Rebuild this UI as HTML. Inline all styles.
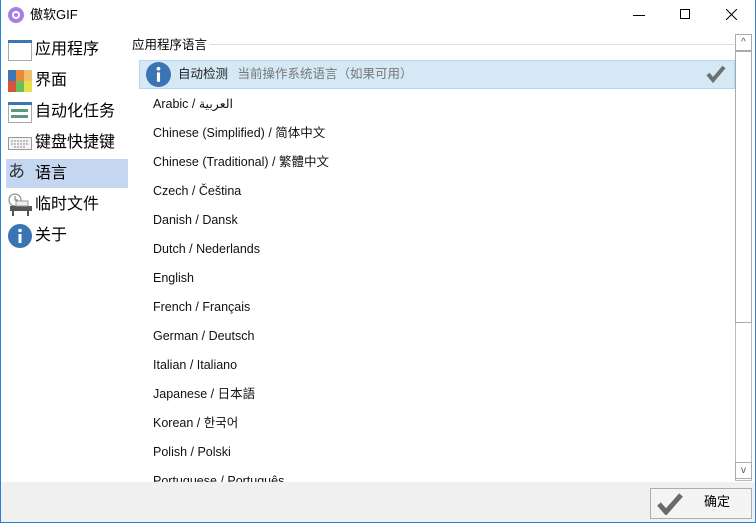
<!DOCTYPE html>
<html><head><meta charset="utf-8"><style>
*{margin:0;padding:0;box-sizing:border-box}
body{width:756px;height:523px;overflow:hidden;background:#fff;font-family:"Liberation Sans","Noto Sans CJK SC",sans-serif;position:relative;color:#000}
.win{position:absolute;left:0;top:0;width:756px;height:523px;border:1px solid #2b7fd6;border-top:none}
.title{position:absolute;left:30px;top:7px;font-size:13px;line-height:16px}
.nav{position:absolute;left:6px;font-size:16px;height:29px;width:122px;line-height:29px;padding-left:29px}
.ic{position:absolute;left:2px;top:3px;width:24px;height:24px}
.item{position:absolute;left:153px;font-size:12.5px;color:#111;line-height:16px;height:16px;white-space:nowrap}
.foot{position:absolute;left:1px;top:482px;width:754px;height:40px;background:#f0f0f0}
</style></head><body>
<div class="win"></div>
<svg style="position:absolute;left:8px;top:7px" width="16" height="16"><circle cx="8" cy="8" r="8" fill="#a57ee6"/><circle cx="8" cy="8" r="4" fill="#fff"/><circle cx="8" cy="8" r="2" fill="#a57ee6"/></svg>
<div class="title">傲软GIF</div>
<div style="position:absolute;left:633px;top:15px;width:12px;height:1px;background:#000"></div>
<div style="position:absolute;left:680px;top:9px;width:10px;height:10px;border:1px solid #000"></div>
<svg style="position:absolute;left:726px;top:9px" width="11" height="11"><path d="M0 0L11 11M11 0L0 11" stroke="#000"/></svg>

<div class="nav" style="top:35px"><svg class="ic" viewBox="0 0 24 24"><rect x="0.5" y="2.5" width="23" height="20" fill="#fff" stroke="#aaa"/><rect x="0" y="2" width="24" height="3" fill="#3d75b5"/></svg>应用程序</div>
<div class="nav" style="top:66px"><svg class="ic" viewBox="0 0 24 24"><rect x="0" y="1" width="8" height="11" fill="#3d75b5"/><rect x="8" y="1" width="8" height="11" fill="#ea8a3a"/><rect x="16" y="1" width="8" height="11" fill="#f0c070"/><rect x="0" y="12" width="8" height="11" fill="#d9533a"/><rect x="8" y="12" width="8" height="11" fill="#6bbf5a"/><rect x="16" y="12" width="8" height="11" fill="#e6e04a"/></svg>界面</div>
<div class="nav" style="top:97px"><svg class="ic" viewBox="0 0 24 24"><rect x="0.5" y="2.5" width="23" height="20" fill="#fff" stroke="#aaa"/><rect x="0" y="2" width="24" height="3" fill="#3d75b5"/><rect x="3" y="9" width="17" height="3" fill="#5a9a7a"/><rect x="3" y="15" width="17" height="3" fill="#5a9a7a"/></svg>自动化任务</div>
<div class="nav" style="top:128px"><svg class="ic" viewBox="0 0 24 24"><rect x="0.5" y="6.5" width="23" height="12" fill="#f4f4f4" stroke="#999"/><path d="M3 10h18M3 13h18M6 16h12" stroke="#888" stroke-dasharray="2 1"/></svg>键盘快捷键</div>
<div class="nav" style="top:159px;background:#c4d6f0"><span class="ic" style="font-size:17px;line-height:20px;color:#333">あ</span>语言</div>
<div class="nav" style="top:190px"><svg class="ic" viewBox="0 0 24 24"><circle cx="7" cy="7" r="6" fill="#fff" stroke="#777"/><path d="M7 3v4h3" stroke="#777" fill="none"/><rect x="2" y="13" width="22" height="5" fill="#555"/><rect x="8" y="8" width="12" height="5" fill="#eee" stroke="#999"/><path d="M5 18v5M20 18v5" stroke="#555" stroke-width="2"/></svg>临时文件</div>
<div class="nav" style="top:221px"><svg class="ic" viewBox="0 0 24 24"><circle cx="12" cy="12" r="12" fill="#3a74b3"/><rect x="10.5" y="10" width="3" height="9" fill="#fff"/><circle cx="12" cy="6.5" r="1.8" fill="#fff"/></svg>关于</div>

<div style="position:absolute;left:132px;top:37px;font-size:12.5px;line-height:16px">应用程序语言</div>
<div style="position:absolute;left:210px;top:44px;width:524px;height:1px;background:#ddd"></div>

<div style="position:absolute;left:139px;top:60px;width:596px;height:29px;background:#d4e8f6;border:1px solid #b6d7ef"></div>
<svg style="position:absolute;left:146px;top:62px" width="25" height="25" viewBox="0 0 24 24"><circle cx="12" cy="12" r="12" fill="#3a74b3"/><rect x="10.5" y="10" width="3" height="9" fill="#fff"/><circle cx="12" cy="6.5" r="1.8" fill="#fff"/></svg>
<div style="position:absolute;left:178px;top:66px;font-size:12.5px;line-height:16px;color:#222">自动检测 <span style="color:#777;margin-left:6px">当前操作系统语言（如果可用）</span></div>
<svg style="position:absolute;left:706px;top:65px" width="20" height="18"><path d="M2 9l5 6L18 2" stroke="#6f6f6f" stroke-width="4" fill="none"/></svg>

<div class="item" style="top:96px">Arabic / العربية</div>
<div class="item" style="top:125px">Chinese (Simplified) / 简体中文</div>
<div class="item" style="top:154px">Chinese (Traditional) / 繁體中文</div>
<div class="item" style="top:183px">Czech / Čeština</div>
<div class="item" style="top:212px">Danish / Dansk</div>
<div class="item" style="top:241px">Dutch / Nederlands</div>
<div class="item" style="top:270px">English</div>
<div class="item" style="top:299px">French / Français</div>
<div class="item" style="top:328px">German / Deutsch</div>
<div class="item" style="top:357px">Italian / Italiano</div>
<div class="item" style="top:386px">Japanese / 日本語</div>
<div class="item" style="top:415px">Korean / 한국어</div>
<div class="item" style="top:444px">Polish / Polski</div>
<div class="item" style="top:473px">Portuguese / Português</div>

<div style="position:absolute;left:735px;top:34px;width:17px;height:447px;background:#fff;border:1px solid #bbb"></div>
<div style="position:absolute;left:735px;top:34px;width:17px;height:17px;border:1px solid #aaa;font-size:10px;text-align:center;line-height:15px;color:#555">^</div>
<div style="position:absolute;left:735px;top:51px;width:17px;height:272px;border:1px solid #aaa;background:#fff"></div>
<div style="position:absolute;left:735px;top:462px;width:17px;height:17px;border:1px solid #aaa;font-size:10px;text-align:center;line-height:15px;color:#555">v</div>

<div class="foot"></div>
<div style="position:absolute;left:650px;top:488px;width:102px;height:31px;border:1px solid #adadad;background:#f4f4f4"></div>
<svg style="position:absolute;left:657px;top:493px" width="26" height="22"><path d="M2 11l7 8L24 2" stroke="#6a6a6a" stroke-width="5" fill="none"/></svg>
<div style="position:absolute;left:704px;top:494px;font-size:13px;line-height:16px">确定</div>
</body></html>
